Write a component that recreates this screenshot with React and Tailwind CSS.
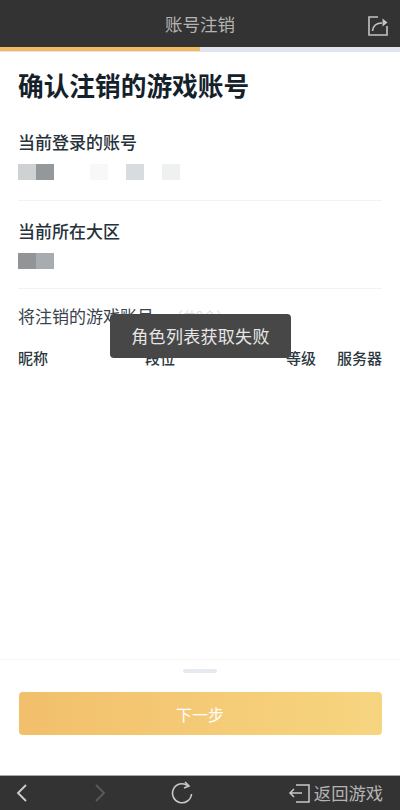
import React from 'react';

const cjk = { fontFamily: '"Noto Sans CJK SC", sans-serif' };

const Blur = ({ className }) => <div className={`h-[16px] w-[18px] blur-[0.5px] ${className}`} />;

const App = () => {
    return (
        <div style={cjk} className="relative w-[400px] h-[810px] flex flex-col bg-white overflow-hidden">
            {/* Header */}
            <div className="h-[47px] shrink-0 bg-[#333333] flex items-center justify-center relative">
                <span className="text-[17.500px] leading-[56px] text-[#b4b4b4]">账号注销</span>
                <svg className="absolute right-[11px] top-[15px] w-[22px] h-[22px]" viewBox="0 0 22 22" fill="none" stroke="#c4c4c4" strokeWidth="1.6">
                    <path d="M11 2H2v18h18v-9" />
                    <path d="M5.5 16c.5-5 3.5-8 9.500-8" />
                    <path d="M15.500 3.500l5 4-5 4z" fill="#c4c4c4" stroke="none" />
                </svg>
            </div>

            {/* Progress */}
            <div className="h-[5px] shrink-0 bg-[#e3e5ee]">
                <div className="h-[4px] w-[200px] bg-[#f3b95f]" />
            </div>

            {/* Content */}
            <div className="flex-1 px-[18px] text-[#17222c]">
                <h1 className="mt-[14px] text-[25.700px] leading-[38px] font-bold text-[#14212b]">确认注销的游戏账号</h1>

                <div className="mt-[25px] h-[72px] border-b border-[#f3f3f3]">
                    <div className="text-[17px] leading-[26px] font-medium text-[#26313a]">当前登录的账号</div>
                    <div className="mt-[9px] flex">
                        <Blur className="bg-[#ced2d3]" />
                        <Blur className="bg-[#94989b]" />
                        <Blur className="ml-[36px] bg-[#f8f8f8]" />
                        <Blur className="ml-[18px] bg-[#d9dcdf]" />
                        <Blur className="ml-[18px] bg-[#eff1f1]" />
                    </div>
                </div>

                <div className="mt-[17px] h-[71px] border-b border-[#f3f3f3]">
                    <div className="text-[17px] leading-[26px] font-medium text-[#26313a]">当前所在大区</div>
                    <div className="mt-[9px] flex">
                        <Blur className="bg-[#919598]" />
                        <Blur className="bg-[#a9acae]" />
                    </div>
                </div>

                <div className="mt-[14px] flex items-center h-[26px]">
                    <span className="text-[17px] text-[#3a444c]">将注销的游戏账号</span>
                    <span className="ml-[16px] text-[13px] text-[#dcdcdc]">（共0个）</span>
                </div>

                <div className="mt-[18px] flex items-center text-[15px] leading-[22px] font-medium text-[#2c3740]">
                    <span className="w-[127px]">昵称</span>
                    <span className="w-[141px]">段位</span>
                    <span>等级</span>
                    <span className="ml-auto">服务器</span>
                </div>
            </div>

            {/* Toast */}
            <div className="absolute left-[110px] top-[314px] w-[181px] h-[44px] rounded-[4px] bg-[#474747] flex items-center justify-center text-[17px] text-[#e6e6e6] tracking-[0.3px]">
                角色列表获取失败
            </div>

            {/* Footer */}
            <div className="shrink-0 h-[116px] flex flex-col items-center border-t-[1px] border-[#f8f8f8] mx-0">
                <div className="mt-[9px] w-[34px] h-[4px] rounded-full bg-[#e6e9f0]" />
                <button className="mt-[19px] w-[363px] h-[43px] rounded-[4px] bg-gradient-to-r from-[#f2bf6c] to-[#f7d580] text-[16px] text-white">下一步</button>
            </div>

            {/* Browser bar */}
            <div className="h-[35px] shrink-0 bg-[#333333] border-t border-[#a8a8a8] flex items-center relative">
                <svg className="ml-[16px] w-[12px] h-[22px]" viewBox="0 0 12 22" fill="none" stroke="#d0d0d0" strokeWidth="1.800">
                    <path d="M10 3L2 11l8 8" />
                </svg>
                <svg className="ml-[66px] w-[12px] h-[22px]" viewBox="0 0 12 22" fill="none" stroke="#5c5c5c" strokeWidth="1.800">
                    <path d="M2 3l8 8-8 8" />
                </svg>
                <svg className="ml-[65px] w-[22px] h-[24px]" viewBox="0 0 22 24" fill="none" stroke="#c8c8c8" strokeWidth="1.600">
                    <path d="M16.500 4.500A9.500 9.500 0 1 0 20.500 13" />
                    <path d="M14 1l4 4-5 2" />
                </svg>
                <div className="ml-auto mr-[17px] flex items-center">
                    <svg className="w-[22px] h-[20px]" viewBox="0 0 22 20" fill="none" stroke="#c8c8c8" strokeWidth="1.500">
                        <path d="M8 2h13v17H8" />
                        <path d="M14 10H2M6 6l-4 4 4 4" />
                    </svg>
                    <span className="ml-[4px] text-[17.300px] leading-[24px] text-[#b4b4b4]">返回游戏</span>
                </div>
            </div>
        </div>
    );
};

export default App;
